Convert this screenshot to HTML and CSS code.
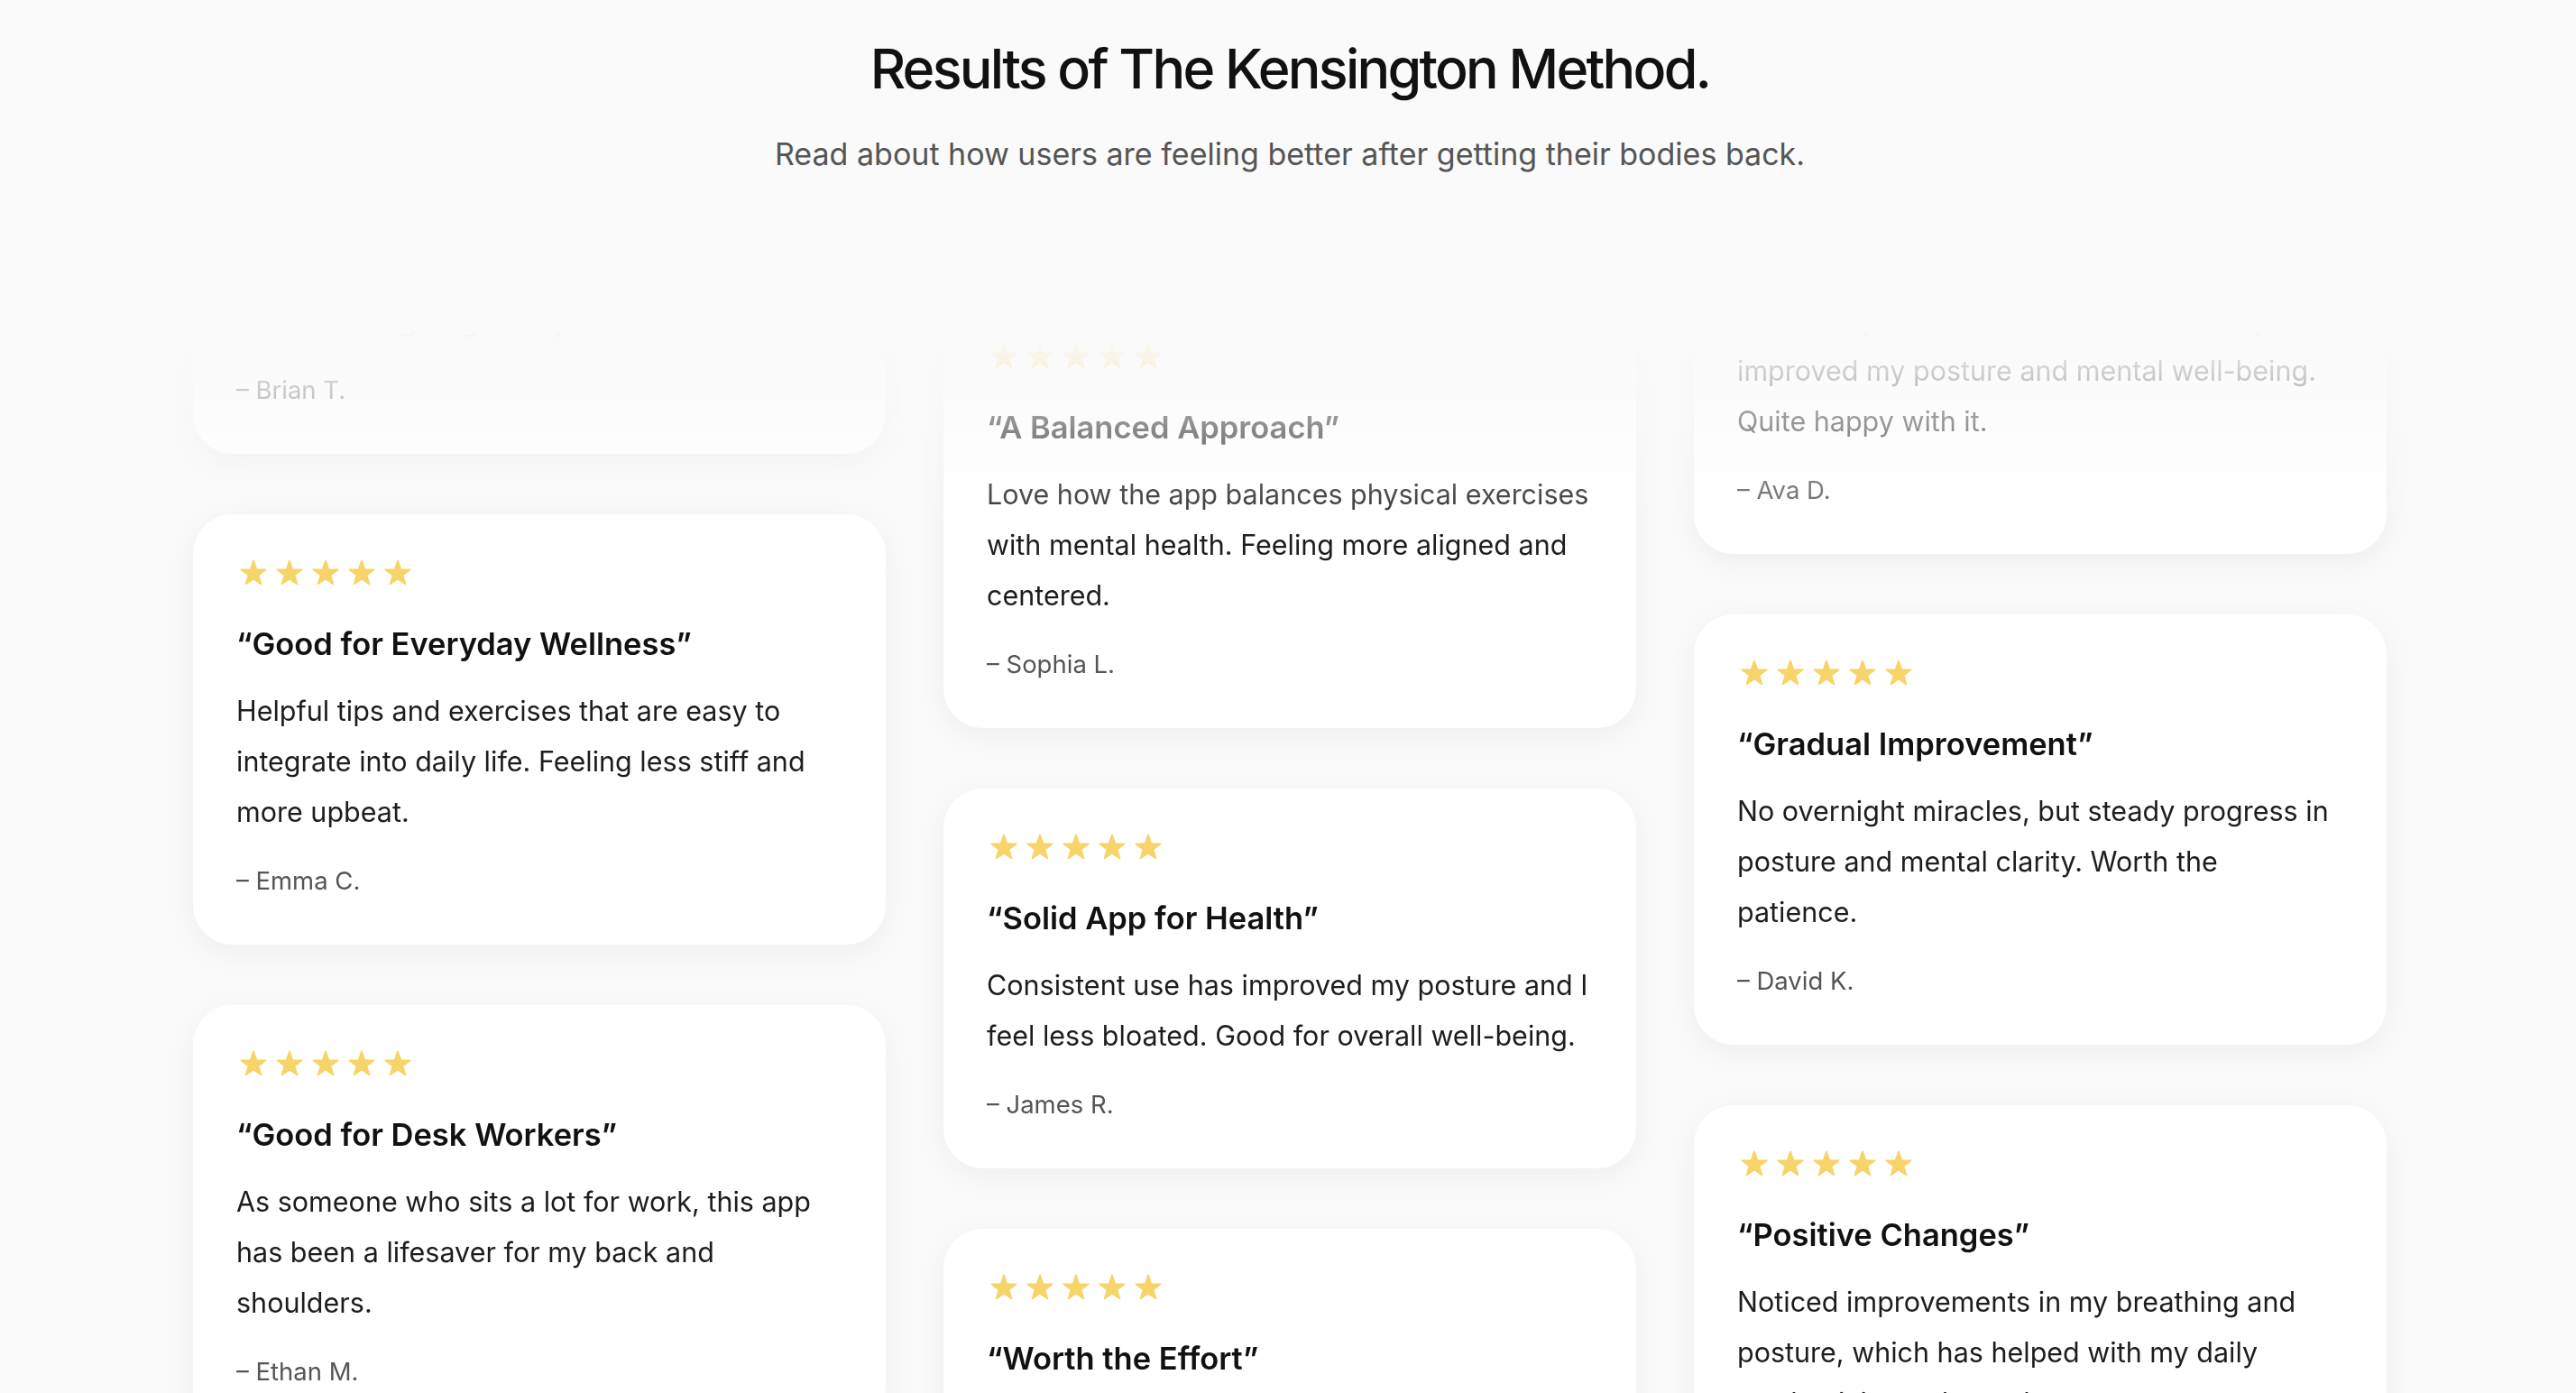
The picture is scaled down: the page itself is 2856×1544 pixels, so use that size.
FILE: index.html
```html
<!DOCTYPE html>
<html lang="en">
<head>
<meta charset="utf-8">
<title>Results of The Kensington Method.</title>
<link rel="stylesheet" href="styles.css">
</head>
<body>
<svg class="defs" width="0" height="0" aria-hidden="true">
  <symbol id="star" viewBox="0 0 30 29">
    <polygon points="15,1.27 18.41,11.08 28.79,11.29 20.52,17.56 23.52,27.5 15,21.57 6.48,27.5 9.48,17.56 1.21,11.29 11.59,11.08" fill="currentColor" stroke="currentColor" stroke-width="1.6" stroke-linejoin="round"/>
  </symbol>
</svg>

<header class="hero">
  <h1 class="hero-title">Results of The Kensington Method.</h1>
  <p class="hero-sub">Read about how users are feeling better after getting their bodies back.</p>
</header>

<section class="wall">
  <div class="wall-inner">
    <div class="col col-a">
      <article class="card">
        <div class="stars"><svg><use href="#star"/></svg><svg><use href="#star"/></svg><svg><use href="#star"/></svg><svg><use href="#star"/></svg><svg><use href="#star"/></svg></div>
        <h3 class="card-title">“Pleasantly Surprised”</h3>
        <p class="card-body">Didn’t expect much at first, but my lower back feels so much better after a few weeks. I’d recommend giving it a try.</p>
        <p class="card-author">– Brian T.</p>
      </article>
      <article class="card">
        <div class="stars"><svg><use href="#star"/></svg><svg><use href="#star"/></svg><svg><use href="#star"/></svg><svg><use href="#star"/></svg><svg><use href="#star"/></svg></div>
        <h3 class="card-title">“Good for Everyday Wellness”</h3>
        <p class="card-body">Helpful tips and exercises that are easy to integrate into daily life. Feeling less stiff and more upbeat.</p>
        <p class="card-author">– Emma C.</p>
      </article>
      <article class="card">
        <div class="stars"><svg><use href="#star"/></svg><svg><use href="#star"/></svg><svg><use href="#star"/></svg><svg><use href="#star"/></svg><svg><use href="#star"/></svg></div>
        <h3 class="card-title">“Good for Desk Workers”</h3>
        <p class="card-body">As someone who sits a lot for work, this app has been a lifesaver for my back and shoulders.</p>
        <p class="card-author">– Ethan M.</p>
      </article>
    </div>

    <div class="col col-b">
      <article class="card">
        <div class="stars"><svg><use href="#star"/></svg><svg><use href="#star"/></svg><svg><use href="#star"/></svg><svg><use href="#star"/></svg><svg><use href="#star"/></svg></div>
        <h3 class="card-title">“A Balanced Approach”</h3>
        <p class="card-body">Love how the app balances physical exercises with mental health. Feeling more aligned and centered.</p>
        <p class="card-author">– Sophia L.</p>
      </article>
      <article class="card">
        <div class="stars"><svg><use href="#star"/></svg><svg><use href="#star"/></svg><svg><use href="#star"/></svg><svg><use href="#star"/></svg><svg><use href="#star"/></svg></div>
        <h3 class="card-title">“Solid App for Health”</h3>
        <p class="card-body">Consistent use has improved my posture and I feel less bloated. Good for overall well-being.</p>
        <p class="card-author">– James R.</p>
      </article>
      <article class="card">
        <div class="stars"><svg><use href="#star"/></svg><svg><use href="#star"/></svg><svg><use href="#star"/></svg><svg><use href="#star"/></svg><svg><use href="#star"/></svg></div>
        <h3 class="card-title">“Worth the Effort”</h3>
        <p class="card-body">Takes a little discipline, but the daily routines really pay off. My energy levels are noticeably better.</p>
        <p class="card-author">– Olivia P.</p>
      </article>
    </div>

    <div class="col col-c">
      <article class="card">
        <div class="stars"><svg><use href="#star"/></svg><svg><use href="#star"/></svg><svg><use href="#star"/></svg><svg><use href="#star"/></svg><svg><use href="#star"/></svg></div>
        <h3 class="card-title">“Feeling Lighter”</h3>
        <p class="card-body">Short daily sessions that have noticeably improved my posture and mental well-being. Quite happy with it.</p>
        <p class="card-author">– Ava D.</p>
      </article>
      <article class="card">
        <div class="stars"><svg><use href="#star"/></svg><svg><use href="#star"/></svg><svg><use href="#star"/></svg><svg><use href="#star"/></svg><svg><use href="#star"/></svg></div>
        <h3 class="card-title">“Gradual Improvement”</h3>
        <p class="card-body">No overnight miracles, but steady progress in posture and mental clarity. Worth the patience.</p>
        <p class="card-author">– David K.</p>
      </article>
      <article class="card">
        <div class="stars"><svg><use href="#star"/></svg><svg><use href="#star"/></svg><svg><use href="#star"/></svg><svg><use href="#star"/></svg><svg><use href="#star"/></svg></div>
        <h3 class="card-title">“Positive Changes”</h3>
        <p class="card-body">Noticed improvements in my breathing and posture, which has helped with my daily productivity and mood.</p>
        <p class="card-author">– Mia S.</p>
      </article>
    </div>
  </div>
</section>
</body>
</html>
```

FILE: styles.css
```css
* {
  box-sizing: border-box;
  margin: 0;
  padding: 0;
}

html {
  background: #fafafa;
}

body {
  font-family: Inter, "Noto Sans", "Liberation Sans", sans-serif;
  color: #1d1d1f;
  background: #fafafa;
  padding-left: 4px;
  height: 1544px;
  overflow: hidden;
}

.defs {
  position: absolute;
  width: 0;
  height: 0;
  overflow: hidden;
}

.hero {
  text-align: center;
  padding-top: 38px;
}

.hero-title {
  font-size: 61px;
  line-height: 76px;
  font-weight: 500;
  letter-spacing: -0.045em;
  color: #111111;
}

.hero-sub {
  margin-top: 35px;
  font-size: 34px;
  line-height: 44px;
  color: #555555;
}

.wall {
  margin-top: 165px;
  height: 1186px;
  overflow: hidden;
  -webkit-mask-image: linear-gradient(to bottom, transparent 0, transparent 8px, #000 238px);
  mask-image: linear-gradient(to bottom, transparent 0, transparent 8px, #000 238px);
}

.wall-inner {
  width: 2432px;
  margin: 0 auto;
  display: grid;
  grid-template-columns: repeat(3, 768px);
  column-gap: 64px;
  align-items: start;
}

.col {
  display: flex;
  flex-direction: column;
  gap: 67px;
}

/* frozen scroll positions of the three marquee columns */
.col-a { transform: translateY(-332px); }
.col-b { transform: translateY(-28px); }
.col-c { transform: translateY(-221px); }

.card {
  background: #ffffff;
  border-radius: 44px;
  padding: 48px 48px 52px;
  box-shadow: 0 8px 32px rgba(0, 0, 0, 0.05);
}

.stars {
  display: flex;
  align-items: center;
  gap: 10px;
  height: 32px;
  padding-left: 4px;
  margin-bottom: 41px;
  color: #f6d469;
}

.stars svg {
  width: 30px;
  height: 29px;
}

.card-title {
  font-size: 34.5px;
  line-height: 46px;
  font-weight: 600;
  color: #111111;
  margin-bottom: 23px;
}

.card-body {
  font-size: 30.5px;
  line-height: 56px;
  color: #1d1d1f;
  margin-bottom: 29px;
}

.card-author {
  font-size: 27.5px;
  line-height: 38px;
  color: #555555;
}
```
